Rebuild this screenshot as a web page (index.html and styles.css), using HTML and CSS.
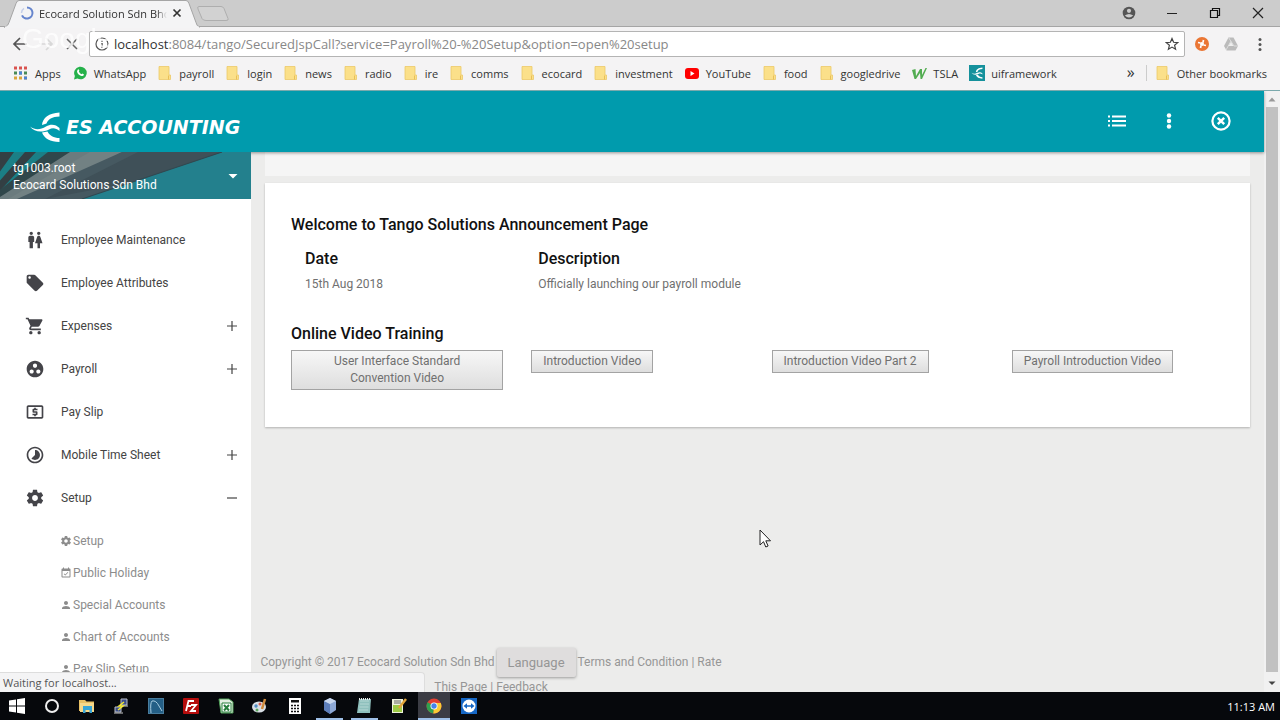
FILE: index.html
```html
<!DOCTYPE html>
<html lang="en">
<head>
<meta charset="utf-8">
<meta name="viewport" content="width=device-width, initial-scale=1">
<title>Ecocard Solution Sdn Bhd</title>
<link rel="stylesheet" href="styles.css">
</head>
<body>
<svg class="symbols" aria-hidden="true">
  <symbol id="folder" viewBox="0 0 16 16"><path d="M2 1.500h10v8.500h1.500v4.500H2z" fill="#fbe08a" stroke="#ecc968" stroke-width=".8"/><path d="M11.500 10.500v4" stroke="#e9bf57"/></symbol>
  <symbol id="gear" viewBox="0 0 24 24"><path fill="currentColor" d="M19.430 12.980c.04-.32.07-.64.07-.98s-.03-.66-.07-.98l2.110-1.650c.19-.15.24-.42.12-.64l-2-3.460c-.12-.22-.39-.3-.61-.22l-2.490 1c-.52-.4-1.080-.73-1.690-.98l-.38-2.650C14.460 2.180 14.250 2 14 2h-4c-.25 0-.46.18-.49.42l-.38 2.650c-.61.25-1.170.59-1.690.98l-2.490-1c-.23-.09-.49 0-.61.22l-2 3.460c-.13.22-.07.49.12.64l2.110 1.650c-.04.32-.07.65-.07.98s.03.66.07.98l-2.110 1.650c-.19.15-.24.42-.12.64l2 3.460c.12.22.39.3.61.22l2.490-1c.52.4 1.080.73 1.690.98l.38 2.650c.03.24.24.42.49.42h4c.25 0 .46-.18.49-.42l.38-2.650c.61-.25 1.170-.59 1.690-.98l2.490 1c.23.09.49 0 .61-.22l2-3.460c.12-.22.07-.49-.12-.64l-2.110-1.650zM12 15.500c-1.930 0-3.500-1.570-3.500-3.500s1.570-3.500 3.500-3.500 3.500 1.570 3.500 3.500-1.570 3.500-3.500 3.500z"/></symbol>
  <symbol id="person" viewBox="0 0 24 24"><path fill="currentColor" d="M12 12c2.210 0 4-1.790 4-4s-1.790-4-4-4-4 1.790-4 4 1.790 4 4 4zm0 2c-2.670 0-8 1.340-8 4v2h16v-2c0-2.660-5.330-4-8-4z"/></symbol>
  <symbol id="plus" viewBox="0 0 12 12"><path d="M1 6h10M6 1v10" stroke="currentColor" stroke-width="1.200"/></symbol>
  <symbol id="minus" viewBox="0 0 12 12"><path d="M1 6h10" stroke="currentColor" stroke-width="1.200"/></symbol>
  <symbol id="swirl" viewBox="0 0 32 32"><path d="M30.500 1.500C20 2 13.500 7 13 14l4.500-1.500C19 8.500 23 5.500 30.500 5.500zM1 15.500C6 19 11 19 17 15.500c5-3 10-2 13.500 1.500v3c-3.500-3-7-3.500-10.500-1.500C13 22 5 21 1 15.500zM13 21.500C15.500 27.500 21 31 30.500 31v-4c-6 0-10-2.500-12-6.500z" fill="#fff"/></symbol>
</svg>

<header class="browser">
  <div class="tabstrip">
    <div class="tab">
      <svg class="tab-shape" viewBox="0 0 196 28" preserveAspectRatio="none" aria-hidden="true"><path d="M0 26.500h2q2-1 3-4l7-19Q13 .5 15 .5h167q2 0 3 3l7 19q1 4 3 4V28H0z" fill="#f4f4f5" stroke="#a5a5a5"/><path d="M1 27.500h194" stroke="#f4f4f5" stroke-width="2"/></svg>
      <svg class="spinner" viewBox="0 0 14 14" aria-hidden="true"><path d="M7 1.500a5.500 5.500 0 1 1-5 7.800" fill="none" stroke="#6685cd" stroke-width="2"/><path d="M1.500 7A5.500 5.500 0 0 1 4 2.400" fill="none" stroke="#c5cfe9" stroke-width="1.500"/></svg>
      <span class="tab-title">Ecocard Solution Sdn Bhd</span>
      <button class="plain" aria-label="Close tab"><svg width="10" height="10" viewBox="0 0 10 10"><path d="M1.500 1.500l7 7M8.500 1.500l-7 7" stroke="#333" stroke-width="1.700"/></svg></button>
    </div>
    <button class="plain newtab" aria-label="New tab"><svg width="34" height="18" viewBox="0 0 34 18"><path d="M3 1.500h22q2 0 3 2l4 10q1 2-2 2H10q-3 0-4-2L2 4q-1-2.500 1-2.500z" fill="#d2d2d2" stroke="#aeaeae"/></svg></button>
    <div class="window-controls">
      <button class="plain" aria-label="Profile"><svg width="14" height="14" viewBox="0 0 14 14"><circle cx="7" cy="7" r="6.300" fill="#555"/><circle cx="7" cy="4.800" r="2.100" fill="#ccc"/><path d="M2.800 9.600q4.200-3.200 8.400 0-4.200 4-8.400 0" fill="#ccc"/></svg></button>
      <button class="plain" aria-label="Minimize"><svg width="14" height="14" viewBox="0 0 14 14"><path d="M2 7.500h10" stroke="#222"/></svg></button>
      <button class="plain" aria-label="Restore"><svg width="14" height="14" viewBox="0 0 14 14"><path d="M2.500 4.500h7v7h-7zM4.500 4.500v-2h7v7h-2" fill="none" stroke="#111" stroke-width="1.200"/></svg></button>
      <button class="plain" aria-label="Close"><svg width="14" height="14" viewBox="0 0 14 14"><path d="M2 2l10 10M12 2L2 12" stroke="#222" stroke-width="1.200"/></svg></button>
    </div>
  </div>

  <div class="toolbar">
    <div class="nav-buttons">
      <button class="plain" aria-label="Back"><svg width="16" height="16" viewBox="0 0 16 16"><path d="M15 8H2.500M8 2L2 8l6 6" fill="none" stroke="#555" stroke-width="1.700"/></svg></button>
      <button class="plain" aria-label="Forward"><svg width="16" height="16" viewBox="0 0 16 16"><path d="M1 8h12.500M8 2l6 6-6 6" fill="none" stroke="#d8d8d8" stroke-width="1.700"/></svg></button>
      <button class="plain" aria-label="Stop"><svg width="16" height="16" viewBox="0 0 16 16"><path d="M3 3l10 10M13 3L3 13" stroke="#666" stroke-width="1.500"/></svg></button>
      <span class="watermark" aria-hidden="true">Google</span>
    </div>
    <div class="omnibox">
      <svg width="14" height="14" viewBox="0 0 14 14" aria-hidden="true"><circle cx="7" cy="7" r="6" fill="none" stroke="#555" stroke-width="1.200"/><path d="M7 6v5M7 3v1.700" stroke="#555" stroke-width="1.500"/></svg>
      <div class="url" role="textbox" aria-label="Address" contenteditable="true" spellcheck="false"><span class="host">localhost</span>:8084/tango/SecuredJspCall?service=Payroll%20-%20Setup&amp;option=open%20setup</div>
      <button class="plain" aria-label="Bookmark this page"><svg width="14" height="14" viewBox="0 0 14 14"><path d="M7 1.500l1.600 3.800 4.100.3-3.100 2.700 1 4L7 10.100l-3.600 2.200 1-4L1.300 5.600l4.100-.3z" fill="none" stroke="#444" stroke-width="1.200"/></svg></button>
    </div>
    <div class="extensions">
      <button class="plain" aria-label="Extension"><svg width="16" height="16" viewBox="0 0 16 16"><circle cx="8" cy="8" r="7" fill="#ea7634"/><path d="M4 6.500l2.500.5M9.500 4l-.5 2.500M12 9.500L9.500 9M6.500 12l.5-2.500" stroke="#fff" stroke-width="1.700" fill="none"/><circle cx="8" cy="8" r="2" fill="#fff"/></svg></button>
      <button class="plain" aria-label="Drive"><svg width="16" height="16" viewBox="0 0 16 16"><path d="M5.500 1.500h5L15 10l-2.500 4.500h-9L1 10z" fill="#bbb"/><path d="M8 5l-5 9M5.500 1.500L11 10h4" stroke="#dcdcdc" fill="none"/><path d="M8 6l2.500 4h-5z" fill="#eee"/></svg></button>
      <button class="plain" aria-label="Menu"><svg width="16" height="16" viewBox="0 0 16 16" fill="#555"><circle cx="8" cy="3.500" r="1.500"/><circle cx="8" cy="8.500" r="1.500"/><circle cx="8" cy="13.500" r="1.500"/></svg></button>
    </div>
  </div>

  <nav class="bookmarks" aria-label="Bookmarks">
    <a href="#"><svg viewBox="0 0 16 16"><g stroke-width="3" stroke-dasharray="3 2"><path d="M1 3h13" stroke="#d9534f"/><path d="M1 8h13" stroke="#4a8a57"/><path d="M1 13h13" stroke="#d9a53c"/></g><path d="M6 8h3M11 13h3" stroke="#4c83d6" stroke-width="3"/></svg>Apps</a>
    <a href="#"><svg viewBox="0 0 16 16"><path d="M2 14.500l.9-3.500a6.300 6.300 0 1 1 2.500 2.500z" fill="#25b14a"/><path d="M5.500 5q1-1.500 1.700.3.300.7-.4 1.300 1 2 2.700 2.600l.8-.8 1.700 1q-.5 2-2.500 1.600-4-1.300-4.500-4.500z" fill="#fff"/></svg>WhatsApp</a>
    <a href="#"><svg><use href="#folder"/></svg>payroll</a>
    <a href="#"><svg><use href="#folder"/></svg>login</a>
    <a href="#"><svg><use href="#folder"/></svg>news</a>
    <a href="#"><svg><use href="#folder"/></svg>radio</a>
    <a href="#"><svg><use href="#folder"/></svg>ire</a>
    <a href="#"><svg><use href="#folder"/></svg>comms</a>
    <a href="#"><svg><use href="#folder"/></svg>ecocard</a>
    <a href="#"><svg><use href="#folder"/></svg>investment</a>
    <a href="#"><svg viewBox="0 0 16 16"><rect x="1" y="3" width="14" height="11" rx="3" fill="#f00"/><path d="M6.500 6l4 2.500-4 2.500z" fill="#fff"/></svg>YouTube</a>
    <a href="#"><svg><use href="#folder"/></svg>food</a>
    <a href="#"><svg><use href="#folder"/></svg>googledrive</a>
    <a href="#"><svg viewBox="0 0 16 16"><path d="M1 5l3.500-1 .5 7 4-7h2v6l3.500-7H16l-5 11H9.500L9 8l-4 6H3.500z" fill="#53ad52"/></svg>TSLA</a>
    <a href="#"><svg viewBox="0 0 16 16"><rect width="16" height="16" fill="#15919c"/><svg x="2" y="2" width="12" height="12"><use href="#swirl"/></svg></svg>uiframework</a>
    <button class="plain more" aria-label="More bookmarks">»</button>
    <a class="other" href="#"><svg><use href="#folder"/></svg>Other bookmarks</a>
  </nav>
</header>

<div class="viewport">
  <div class="page">
    <header class="appbar">
      <a class="brand" href="#"><svg width="32" height="32" aria-hidden="true"><use href="#swirl"/></svg><span>ES ACCOUNTING</span></a>
      <div class="app-actions">
        <button class="plain" aria-label="List"><svg width="20" height="20" viewBox="0 0 20 20"><path d="M1 5.500h2M1 10h2M1 14.500h2M5 5.500h14M5 10h14M5 14.500h14" stroke="#fff" stroke-width="2"/></svg></button>
        <button class="plain" aria-label="More options"><svg width="20" height="20" viewBox="0 0 20 20" fill="#fff"><circle cx="10" cy="4.500" r="2.200"/><circle cx="10" cy="10" r="2.200"/><circle cx="10" cy="15.500" r="2.200"/></svg></button>
        <button class="plain" aria-label="Close session"><svg width="20" height="20" viewBox="0 0 20 20"><circle cx="10" cy="10" r="8.600" fill="none" stroke="#fff" stroke-width="2.200"/><path d="M6.800 6.800l6.400 6.400m0-6.400l-6.400 6.400" stroke="#fff" stroke-width="2.400"/></svg></button>
      </div>
    </header>

    <div class="columns">
      <aside class="sidebar">
        <button class="account">
          <svg class="account-art" viewBox="0 0 251 46" preserveAspectRatio="none" aria-hidden="true"><rect width="251" height="46" fill="#23808d"/><path d="M0 0h72L0 46z" fill="#1b7f86"/><path d="M0 0h14L0 19zM25 0h11L0 38V28z" fill="#333f43"/><path d="M48 0h24L0 46V37z" fill="#30474b"/><path d="M70 0h52L22 46H0v-2z" fill="#6b7b7e"/><path d="M90 0h32L35 46H8z" fill="#728183"/><path d="M122 0h100L82 46H17z" fill="#465961"/><path d="M138 0h84L130 30 45 46z" fill="#3f5058"/><path d="M222 0L82 46" stroke="#314850"/></svg>
          <span class="account-text"><span>tg1003.root</span><span>Ecocard Solutions Sdn Bhd</span></span>
          <svg width="10" height="5" viewBox="0 0 10 5" aria-hidden="true"><path d="M.5 0h9L5 4.500z" fill="#fff"/></svg>
        </button>
        <nav class="menu" aria-label="Main menu">
          <a class="item" href="#"><svg class="icon" viewBox="0 0 24 24"><path d="M5.500 22v-7.500H4V9c0-1.100.9-2 2-2h3c1.100 0 2 .9 2 2v5.500H9.500V22h-4zM18 22v-6h3l-2.540-7.630C18.180 7.550 17.420 7 16.560 7h-.12c-.86 0-1.630.55-1.900 1.370L12 16h3v6h3zM7.500 6c1.110 0 2-.89 2-2s-.89-2-2-2-2 .89-2 2 .89 2 2 2zm9 0c1.110 0 2-.89 2-2s-.89-2-2-2-2 .89-2 2 .89 2 2 2z"/></svg><span>Employee Maintenance</span></a>
          <a class="item" href="#"><svg class="icon" viewBox="0 0 24 24"><path d="M21.410 11.580l-9-9C12.050 2.220 11.550 2 11 2H4c-1.100 0-2 .9-2 2v7c0 .55.22 1.050.59 1.420l9 9c.36.36.86.58 1.410.58.55 0 1.050-.22 1.410-.59l7-7c.37-.36.59-.86.59-1.410 0-.55-.23-1.060-.59-1.420zM5.500 7C4.670 7 4 6.330 4 5.500S4.670 4 5.500 4 7 4.670 7 5.500 6.330 7 5.500 7z"/></svg><span>Employee Attributes</span></a>
          <button class="item"><svg class="icon" viewBox="0 0 24 24"><path d="M7 18c-1.100 0-1.990.9-1.990 2S5.900 22 7 22s2-.9 2-2-.9-2-2-2zM1 2v2h2l3.600 7.590-1.350 2.450c-.16.28-.25.61-.25.96 0 1.100.9 2 2 2h12v-2H7.420c-.14 0-.25-.11-.25-.25l.03-.12.900-1.630h7.450c.75 0 1.410-.41 1.750-1.030l3.580-6.490c.08-.14.12-.31.12-.48 0-.55-.45-1-1-1H5.210l-.94-2H1zm16 16c-1.100 0-1.990.9-1.990 2s.89 2 1.990 2 2-.9 2-2-.9-2-2-2z"/></svg><span>Expenses</span><svg class="toggle"><use href="#plus"/></svg></button>
          <button class="item"><svg class="icon" viewBox="0 0 24 24"><path d="M12 2C6.480 2 2 6.480 2 12s4.480 10 10 10 10-4.480 10-10S17.520 2 12 2zM8 17.500c-1.380 0-2.500-1.120-2.500-2.500s1.120-2.500 2.500-2.500 2.500 1.120 2.500 2.500-1.120 2.500-2.500 2.500zM9.500 8c0-1.380 1.120-2.500 2.500-2.500s2.500 1.120 2.500 2.500-1.120 2.500-2.500 2.500S9.500 9.380 9.500 8zm6.500 9.500c-1.380 0-2.500-1.120-2.500-2.500s1.120-2.500 2.500-2.500 2.500 1.120 2.500 2.500-1.120 2.500-2.500 2.500z"/></svg><span>Payroll</span><svg class="toggle"><use href="#plus"/></svg></button>
          <a class="item" href="#"><svg class="icon" viewBox="0 0 24 24"><path d="M11 17h2v-1h1c.55 0 1-.45 1-1v-3c0-.55-.45-1-1-1h-3v-1h4V8h-2V7h-2v1h-1c-.55 0-1 .45-1 1v3c0 .55.45 1 1 1h3v1H9v2h2v1zm9-13H4c-1.110 0-1.990.89-1.990 2L2 18c0 1.110.89 2 2 2h16c1.110 0 2-.89 2-2V6c0-1.110-.89-2-2-2zm0 14H4V6h16v12z"/></svg><span>Pay Slip</span></a>
          <button class="item"><svg class="icon" viewBox="0 0 24 24"><path d="M16.240 7.760C15.070 6.590 13.540 6 12 6v6l-4.240 4.240c2.340 2.340 6.140 2.340 8.490 0 2.340-2.340 2.340-6.140-.01-8.480zM12 2C6.480 2 2 6.480 2 12s4.480 10 10 10 10-4.480 10-10S17.520 2 12 2zm0 18c-4.420 0-8-3.580-8-8s3.580-8 8-8 8 3.580 8 8-3.580 8-8 8z"/></svg><span>Mobile Time Sheet</span><svg class="toggle"><use href="#plus"/></svg></button>
          <button class="item" aria-expanded="true"><svg class="icon"><use href="#gear"/></svg><span>Setup</span><svg class="toggle"><use href="#minus"/></svg></button>
          <div class="submenu">
            <a href="#"><svg><use href="#gear"/></svg>Setup</a>
            <a href="#"><svg viewBox="0 0 24 24"><path fill="currentColor" d="M16.530 11.060L15.470 10l-4.880 4.880-2.120-2.120-1.060 1.060L10.590 17l5.940-5.940zM19 3h-1V1h-2v2H8V1H6v2H5c-1.110 0-1.990.9-1.990 2L3 19c0 1.100.89 2 2 2h14c1.100 0 2-.9 2-2V5c0-1.100-.9-2-2-2zm0 16H5V8h14v11z"/></svg>Public Holiday</a>
            <a href="#"><svg><use href="#person"/></svg>Special Accounts</a>
            <a href="#"><svg><use href="#person"/></svg>Chart of Accounts</a>
            <a href="#"><svg><use href="#person"/></svg>Pay Slip Setup</a>
          </div>
        </nav>
      </aside>

      <div class="content">
        <div class="crumbs"></div>
        <main class="card">
          <h1>Welcome to Tango Solutions Announcement Page</h1>
          <table class="news">
            <thead><tr><th scope="col">Date</th><th scope="col">Description</th></tr></thead>
            <tbody><tr><td>15th Aug 2018</td><td>Officially launching our payroll module</td></tr></tbody>
          </table>
          <h2>Online Video Training</h2>
          <div class="videos">
            <button>User Interface Standard Convention Video</button>
            <button>Introduction Video</button>
            <button>Introduction Video Part 2</button>
            <button>Payroll Introduction Video</button>
          </div>
        </main>
        <footer class="footer">Copyright © 2017 Ecocard Solution Sdn Bhd<button class="language">Language</button><a href="#">Terms and Condition</a> | <a href="#">Rate This Page</a> | <a href="#">Feedback</a></footer>
      </div>
    </div>
  </div>
  <div class="scrollbar" aria-hidden="true">
    <svg width="16" height="16" viewBox="0 0 16 16"><path d="M4.500 10.500L8 6.500l3.500 4z" fill="#999"/></svg>
    <div class="thumb"></div>
    <svg width="16" height="20" viewBox="0 0 16 20"><path d="M4.500 9.500h7L8 13z" fill="#444"/></svg>
  </div>
  <div class="status" role="status">Waiting for localhost...</div>
  <svg class="cursor" width="13" height="20" viewBox="0 0 13 20" aria-hidden="true"><path d="M1 1v15l3.500-3.300 2.300 5.300 2.300-1-2.300-5.200H11.500z" fill="#fff" stroke="#222"/></svg>
</div>

<footer class="taskbar">
  <div class="apps">
    <button class="plain" aria-label="Start"><svg viewBox="0 0 16 16"><path d="M0 2.500l7-1v6H0zM8 1.300L16 0v7.500H8zM0 8.500h7v6l-7-1zM8 8.500h8V16l-8-1.300z" fill="#fff"/></svg></button>
    <button class="plain" aria-label="Cortana"><svg viewBox="0 0 16 16"><circle cx="8" cy="8" r="6" fill="none" stroke="#eee" stroke-width="2"/></svg></button>
    <button class="plain" aria-label="File Explorer"><svg viewBox="0 0 16 16"><path d="M0 2h6l1.500 1.500H15V13H0z" fill="#e8c065"/><path d="M1 5h14v9H1z" fill="#f6d98b"/><path d="M4 8h9v7h-2.500v-3h-4v3H4z" fill="#38a5d5"/></svg></button>
    <button class="plain" aria-label="Terminal"><svg viewBox="0 0 16 16"><path d="M8 1h6v6H8zM2 9h6v5H2z" fill="#3b4d86" stroke="#bcc0c9"/><path d="M1 15h9M9 8h6" stroke="#ccc"/><path d="M11 4L6 8h4l-5 4" fill="none" stroke="#f3e935" stroke-width="1.500"/></svg></button>
    <button class="plain" aria-label="Database"><svg viewBox="0 0 16 16"><rect x=".5" y=".5" width="15" height="15" fill="#245f86" stroke="#497d9e"/><path d="M3 15Q2 5 4 3q4-1 7 5l3 5" fill="none" stroke="#a8cce0"/></svg></button>
    <button class="plain" aria-label="FTP"><svg viewBox="0 0 16 16"><rect width="16" height="16" rx="1" fill="#b50d0d"/><path d="M3 13L5.500 3H11M4.500 8H8M8 7h5l-5 6h5" fill="none" stroke="#fff" stroke-width="1.800"/></svg></button>
    <button class="plain" aria-label="Spreadsheet"><svg viewBox="0 0 16 16"><path d="M1 1h10l4 3v11H3z" fill="#e4efe2" stroke="#4e9f58"/><path d="M4 5h9v9H4z" fill="#fff" stroke="#277f3d"/><path d="M6 7l5 5.500M11 7l-5 5.500" stroke="#277f3d" stroke-width="2"/></svg></button>
    <button class="plain" aria-label="Paint"><svg viewBox="0 0 16 16"><ellipse cx="7" cy="9" rx="7" ry="5.500" fill="#d8dfe6"/><circle cx="4" cy="8" r="1.700" fill="#4f8cc4"/><circle cx="8" cy="6" r="1.500" fill="#d65a4a"/><circle cx="5" cy="12" r="1.500" fill="#5aa45d"/><path d="M13 1l-3 10" stroke="#cf8a3b" stroke-width="2.500"/></svg></button>
    <button class="plain" aria-label="Calculator"><svg viewBox="0 0 16 16"><path d="M2 0h12v16H2z" fill="#fff"/><path d="M4 2h8v2.500H4z" fill="#111"/><path d="M4 7.500h8M4 10.500h8M4 13.500h8" stroke="#111" stroke-width="1.500" stroke-dasharray="2 1"/></svg></button>
    <button class="plain open" aria-label="VirtualBox"><svg viewBox="0 0 16 16"><path d="M8 0l6 3v9l-6 4-6-4V3z" fill="#8da8d6"/><path d="M8 6v10l-6-4V3z" fill="#5d7ebb"/><path d="M8 0l6 3-6 3-6-3z" fill="#c9d7ee"/></svg></button>
    <button class="plain open" aria-label="Notepad"><svg viewBox="0 0 16 16"><path d="M3 1h12l-1 14H1z" fill="#8fc0bd"/><path d="M4 3h9M4 6h9M3.500 9h9M3 12h9" stroke="#b4d7d4"/><path d="M3 1h12" stroke="#eee" stroke-dasharray="1 1" stroke-width="2"/></svg></button>
    <button class="plain" aria-label="Editor"><svg viewBox="0 0 16 16"><path d="M1 1h11v14H1z" fill="#eef2dc"/><path d="M2 7h9v7H2z" fill="#9cca45"/><path d="M3 3h7M3 5h7" stroke="#666"/><path d="M15 1l-7 9" stroke="#e3a53a" stroke-width="2.500"/></svg></button>
    <button class="plain open active" aria-label="Chrome"><svg viewBox="0 0 16 16"><circle cx="8" cy="8" r="7.500" fill="#e34133"/><path d="M8 8L1.500 4.300A7.500 7.500 0 0 0 7.500 15.500z" fill="#2fa24f"/><path d="M8 8l-.6 7.500A7.500 7.500 0 0 0 14.800 5H8z" fill="#f9cb34"/><circle cx="8" cy="8" r="3.500" fill="#fff"/><circle cx="8" cy="8" r="2.700" fill="#4484ed"/></svg></button>
    <button class="plain" aria-label="TeamViewer"><svg viewBox="0 0 16 16"><rect width="16" height="16" fill="#1667c5"/><circle cx="8" cy="8" r="6.500" fill="#fff"/><path d="M2.500 8L6 5.300v2h4v-2L13.500 8 10 10.700v-2H6v2z" fill="#1667c5"/></svg></button>
  </div>
  <time>11:13 AM</time>
</footer>
</body>
</html>
```

FILE: styles.css
```css
* { box-sizing: border-box; }

body {
  margin: 0;
  height: 100vh;
  display: flex;
  flex-direction: column;
  overflow: hidden;
  font-family: "Open Sans", sans-serif;
  font-size: 11px;
  color: #333;
}

a { color: inherit; text-decoration: none; }
button { font: inherit; color: inherit; }
svg { display: block; flex: none; }
.symbols { width: 0; height: 0; position: absolute; }

.plain {
  display: flex;
  align-items: center;
  justify-content: center;
  padding: 0;
  border: 0;
  background: none;
}

/* Browser frame */
.browser { flex: none; background: #f4f3f4; border-bottom: 1px solid #7aa9ac; }

.tabstrip {
  display: flex;
  height: 27px;
  padding-left: 4px;
  background: #ccc;
  border-bottom: 1px solid #a5a5a5;
}
.tab {
  position: relative;
  display: flex;
  align-items: center;
  width: 196px;
  height: 28px;
  padding: 0 18px 2px 16px;
  gap: 5px;
}
.tab-shape { position: absolute; inset: 0; width: 100%; height: 100%; }
.spinner, .tab-title, .tab button { position: relative; }
.spinner { width: 14px; height: 14px; }
.tab-title {
  flex: 1;
  overflow: hidden;
  white-space: nowrap;
  mask-image: linear-gradient(90deg, #000 92%, transparent);
}
.newtab { margin-left: -4px; height: 27px; }
.window-controls { display: flex; gap: 29px; margin-left: auto; padding-right: 15px; height: 25px; }

.toolbar { display: flex; align-items: center; height: 34px; padding: 0 12px; gap: 9px; }
.nav-buttons { position: relative; display: flex; gap: 10px; }
.watermark {
  position: absolute;
  left: 10px;
  top: -12px;
  font: 28px/30px "Liberation Sans", sans-serif;
  color: #fff;
  opacity: .8;
}
.omnibox {
  flex: 1;
  display: flex;
  align-items: center;
  gap: 5px;
  height: 26px;
  padding: 0 5px;
  background: #fff;
  border: 1px solid #b4b4b4;
  border-radius: 2px;
}
.url { flex: 1; font-size: 13px; color: #888; white-space: nowrap; outline: 0; }
.host { color: #333; }
.extensions { display: flex; gap: 13px; }

.bookmarks { display: flex; align-items: center; height: 29px; padding: 0 13px 5px; gap: 11px; white-space: nowrap; }
.bookmarks a { display: flex; align-items: center; gap: 6px; }
.bookmarks a > svg { width: 16px; height: 16px; }
.more { margin-left: auto; font-size: 16px; line-height: 20px; padding-bottom: 2px; }
.bookmarks .other { padding-left: 8px; border-left: 1px solid #ccc; }

/* Web page area */
.viewport {
  position: relative;
  flex: 1;
  min-height: 0;
  display: flex;
  overflow: hidden;
  background: #ececeb;
  font-family: Roboto, sans-serif;
  font-size: 12px;
}
.page { flex: 1; min-width: 0; display: flex; flex-direction: column; }

.appbar {
  position: relative;
  flex: none;
  display: flex;
  align-items: center;
  justify-content: space-between;
  height: 61px;
  padding: 0 33px 2px 29px;
  background: #009bad;
  box-shadow: 0 1px 3px rgba(0, 0, 0, .4);
}
.brand {
  display: flex;
  align-items: center;
  gap: 5px;
  padding-top: 13px;
  color: #fff;
  font: italic bold 19px "DejaVu Sans", sans-serif;
}
.app-actions { display: flex; gap: 32px; }

.columns { flex: 1; min-height: 0; display: flex; }
.sidebar { flex: none; width: 251px; background: #fff; overflow: hidden; }
.account {
  position: relative;
  display: flex;
  align-items: center;
  justify-content: space-between;
  width: 100%;
  height: 47px;
  padding: 2px 13px 0;
  border: 0;
  color: #fff;
  text-align: left;
  background: #23808d;
}
.account-art { position: absolute; inset: 0; width: 100%; height: 100%; }
.account-text { position: relative; display: flex; flex-direction: column; line-height: 17px; }
.account > svg:last-child { position: relative; }

.menu { padding-top: 19px; color: #444; }
.item {
  display: flex;
  align-items: center;
  width: 100%;
  height: 43px;
  padding: 0 13px 0 25px;
  gap: 16px;
  border: 0;
  background: none;
  text-align: left;
}
.item span { flex: 1; }
.icon { width: 20px; height: 20px; fill: #444449; color: #444449; }
.toggle { width: 12px; height: 12px; }
.submenu { padding: 6px 0 0 60px; color: #8c8c8c; }
.submenu a { display: flex; align-items: center; height: 32px; gap: 1px; white-space: nowrap; }
.submenu svg { width: 12px; height: 12px; }

.content { flex: 1; min-width: 0; display: flex; flex-direction: column; padding: 0 14px; }
.crumbs { flex: none; height: 24px; margin-bottom: 7px; background: #f5f5f5; }
.card {
  flex: none;
  padding: 33px 26px 37px;
  background: #fff;
  box-shadow: 0 1px 2px rgba(0, 0, 0, .25);
  color: #707070;
}
h1, h2, .news th { margin: 0; font-size: 16px; font-weight: 500; line-height: 18px; color: #111; }
.news { width: 100%; margin: 13px 0 30px; border-collapse: collapse; table-layout: fixed; line-height: 16px; }
.news th, .news td { padding: 3px 0 3px 14px; text-align: left; }
.news td { padding-top: 5px; }
.news th:first-child { width: 25%; }
.videos { display: grid; grid-template-columns: repeat(4, 1fr); gap: 28px; margin-top: 7px; align-items: start; justify-items: start; }
.videos button {
  padding: 2px 11px;
  border: 1px solid #a3a3a3;
  border-radius: 0;
  line-height: 17px;
  background: linear-gradient(#f7f7f7, #dedede);
}

.footer {
  width: 476px;
  margin: auto -10px -5px -12px;
  text-align: center;
  line-height: 20px;
  color: #969696;
}
.language {
  height: 29px;
  margin: 0 2px;
  padding: 0 11px;
  border: 0;
  border-radius: 2px;
  vertical-align: middle;
  background: #dfdddd;
  box-shadow: 0 1px 3px rgba(0, 0, 0, .35);
  font-size: 13px;
}

.scrollbar { flex: none; width: 16px; display: flex; flex-direction: column; background: #f1f1f1; }
.thumb { flex: 1; margin: 0 2px; background: #c1c1c1; }

.status {
  position: absolute;
  left: 0;
  bottom: 0;
  width: 425px;
  height: 20px;
  padding-left: 3px;
  border-top: 1px solid #ddd;
  border-right: 1px solid #ddd;
  border-top-right-radius: 4px;
  background: #f4f4f5;
  font: 11px/19px "Open Sans", sans-serif;
  color: #555;
}
.cursor { position: absolute; left: 759px; top: 438px; }

/* Desktop taskbar */
.taskbar {
  flex: none;
  display: flex;
  align-items: center;
  justify-content: space-between;
  height: 28px;
  padding-right: 5px;
  background: #06080c;
  color: #fff;
}
.apps { display: grid; grid-template-columns: repeat(14, 1fr); width: 486px; height: 100%; }
.apps svg { width: 16px; height: 16px; }
.apps button { margin: 0 4px; border-bottom: 2px solid transparent; border-top: 2px solid transparent; }
.apps .open { border-bottom-color: #9fc0e8; }
.apps .active { margin: 0 1px; background: #3b3c44; border-top-color: #3b3c44; }
```
